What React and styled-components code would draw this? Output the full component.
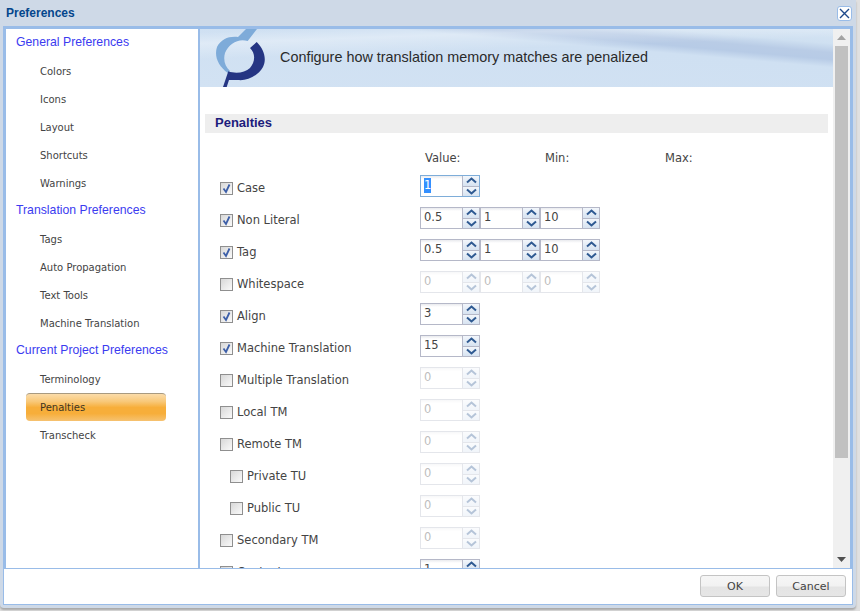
import styled, { createGlobalStyle } from "styled-components";

const GlobalStyle = createGlobalStyle`
  html, body {
    margin: 0;
    padding: 0;
    background: #e0e0e0;
    overflow: hidden;
  }
  * {
    box-sizing: border-box;
  }
`;

const Page = styled.div`
  width: 860px;
  height: 611px;
`;

const Window = styled.div`
  width: 856px;
  height: 608px;
  padding: 0 3px;
  display: flex;
  flex-direction: column;
  background: #ced9e7;
  border-radius: 0 0 4px 4px;
  box-shadow: 0 2px 2px #a8a8a8;
`;

const TitleBar = styled.div`
  height: 26px;
  flex: none;
  display: flex;
  align-items: center;
  justify-content: space-between;
  padding: 0 1px 0 3px;
  font: bold 12px "Liberation Sans", Arial, sans-serif;
  color: #04468c;
`;

const CloseButton = styled.div`
  width: 15px;
  height: 15px;
  border: 1px solid #99bce8;
  border-radius: 3px;
  background: #fff;
  display: flex;
  align-items: center;
  justify-content: center;
`;

const Main = styled.div`
  height: 543px;
  flex: none;
  display: flex;
  border: solid #99bce8;
  border-width: 3px 3px 1px 3px;
  background: #fff;
`;

const Nav = styled.div`
  width: 194px;
  flex: none;
  border-right: 2px solid #99bce8;
  padding-left: 10px;
`;

const NavGroup = styled.div`
  height: 28px;
  font: 12.25px/26px "Liberation Sans", Arial, sans-serif;
  color: #3b3bf0;
`;

const NavItem = styled.div`
  height: 28px;
  width: 140px;
  margin-left: 10px;
  padding: 1px 0 0 14px;
  border-radius: 4px;
  font: 10px/28px "DejaVu Sans", sans-serif;
  color: #444;
  ${(p) =>
    p.$active &&
    `
    color: #3d3522;
    padding-top: 0;
    border-top: 1px solid #a89a80;
    background: linear-gradient(#fbdcaa 0%, #f8c878 28%, #f7ae3a 50%, #f7ae3a 72%, #f6c271 100%);
  `}
`;

const Content = styled.div`
  flex: 1;
  min-width: 0;
  display: flex;
  overflow: hidden;
`;

const Pane = styled.div`
  flex: 1;
  min-width: 0;
  overflow: hidden;
`;

const Banner = styled.div`
  height: 58px;
  display: flex;
  align-items: center;
  gap: 15px;
  padding-left: 15px;
  background:
    linear-gradient(178deg, rgba(255, 255, 255, 0) 4%, rgba(255, 255, 255, 0.32) 18%, rgba(255, 255, 255, 0) 38%),
    linear-gradient(185deg, #d6e5f4 0%, #cfe0f1 13%, #b9cce6 21%, #b7cbe6 27%, #cfe0f2 34%, #d2e2f3 100%);
`;

const BannerText = styled.div`
  font: 14.4px "Liberation Sans", Arial, sans-serif;
  color: #2a2a2a;
  margin-bottom: 2px;
`;

const SectionBar = styled.div`
  margin: 27px 5px 0 5px;
  height: 19px;
  padding-left: 10px;
  background: #eeeeee;
  font: bold 13px/17px "Liberation Sans", Arial, sans-serif;
  color: #1c1c7c;
`;

const ColumnHeads = styled.div`
  display: flex;
  height: 16px;
  margin: 17px 0 0 225px;
`;

const ColumnHead = styled.div`
  width: 120px;
  font: 11.5px/16px "DejaVu Sans", sans-serif;
  color: #444;
`;

const Rows = styled.div`
  margin-top: 6px;
`;

const Row = styled.div`
  height: 32px;
  display: flex;
  align-items: center;
  padding-left: ${(p) => (p.$indent ? 30 : 20)}px;
`;

const Check = styled.div`
  width: 13px;
  height: 13px;
  flex: none;
  border: 1px solid #8f8f8f;
  background: linear-gradient(135deg, #d8d8d8, #fafafa);
  display: flex;
  align-items: center;
  justify-content: center;
`;

const Label = styled.div`
  width: ${(p) => (p.$indent ? 177 : 187)}px;
  padding-left: 4px;
  flex: none;
  font: 11.5px "DejaVu Sans", sans-serif;
  color: #444;
`;

const Spinners = styled.div`
  display: flex;
  margin-top: -4px;
`;

const SpinnerBox = styled.div`
  width: 60px;
  height: 22px;
  display: flex;
  border: 1px solid ${(p) => (p.$focus ? "#7eadd9" : "#b5b8c8")};
  opacity: ${(p) => (p.$disabled ? 0.35 : 1)};
`;

const SpinnerValue = styled.div`
  flex: 1;
  padding: 0 0 0 3px;
  background: linear-gradient(#e9eaee, #fff 3px);
  font: 11.5px/19px "DejaVu Sans", sans-serif;
  color: #444;
`;

const Selected = styled.span`
  display: inline-block;
  line-height: 15px;
  background: #3390ff;
  color: #fff;
`;

const SpinButtons = styled.div`
  width: 17px;
  display: flex;
  flex-direction: column;
`;

const SpinButton = styled.div`
  flex: 1;
  display: flex;
  align-items: center;
  justify-content: center;
  background: linear-gradient(#f2f6fb, #d7e3f1);
  border-left: 1px solid #b5b8c8;
  & + & {
    border-top: 1px solid #b5b8c8;
  }
`;

const Scrollbar = styled.div`
  width: 17px;
  flex: none;
  display: flex;
  flex-direction: column;
  align-items: center;
  background: #f0f0f0;
  padding: 0 2px 0;
`;

const ScrollArrow = styled.div`
  height: 17px;
  flex: none;
  display: flex;
  align-items: center;
  justify-content: center;
`;

const ScrollThumb = styled.div`
  width: 13px;
  height: 412px;
  flex: none;
  background: #c1c1c1;
`;

const ScrollSpace = styled.div`
  flex: 1;
`;

const Footer = styled.div`
  flex: 1;
  display: flex;
  justify-content: flex-end;
  gap: 6px;
  padding: 6px 6px 0 0;
  background: #fff;
  border: 1px solid #99bce8;
  border-top: none;
  margin-bottom: 3px;
`;

const Button = styled.div`
  width: 70px;
  height: 22px;
  border: 1px solid #c4c4c4;
  border-radius: 3px;
  text-align: center;
  font: 11px/21px "DejaVu Sans", sans-serif;
  color: #444;
  background: linear-gradient(#f6f6f6 0%, #f2f2f2 50%, #e4e4e4 55%, #e6e6e6 100%);
`;

const navData = [
  { title: "General Preferences", items: ["Colors", "Icons", "Layout", "Shortcuts", "Warnings"] },
  { title: "Translation Preferences", items: ["Tags", "Auto Propagation", "Text Tools", "Machine Translation"] },
  { title: "Current Project Preferences", items: ["Terminology", "Penalties", "Transcheck"] },
];

const rows = [
  { label: "Case", checked: true, values: ["1"], focus: true },
  { label: "Non Literal", checked: true, values: ["0.5", "1", "10"] },
  { label: "Tag", checked: true, values: ["0.5", "1", "10"] },
  { label: "Whitespace", values: ["0", "0", "0"], disabled: true },
  { label: "Align", checked: true, values: ["3"] },
  { label: "Machine Translation", checked: true, values: ["15"] },
  { label: "Multiple Translation", values: ["0"], disabled: true },
  { label: "Local TM", values: ["0"], disabled: true },
  { label: "Remote TM", values: ["0"], disabled: true },
  { label: "Private TU", values: ["0"], disabled: true, indent: true },
  { label: "Public TU", values: ["0"], disabled: true, indent: true },
  { label: "Secondary TM", values: ["0"], disabled: true },
  { label: "Context", values: ["1"] },
];

const Chevron = ({ up }) => (
  <svg width="11" height="7" viewBox="0 0 11 7">
    <path d={up ? "M1 5.5 5.5 1.5 10 5.5" : "M1 1.5 5.5 5.5 10 1.5"} fill="none" stroke="#2f5a92" strokeWidth="2" />
  </svg>
);

const Spinner = ({ value, focus, disabled }) => (
  <SpinnerBox $focus={focus} $disabled={disabled}>
    <SpinnerValue>{focus ? <Selected>{value}</Selected> : value}</SpinnerValue>
    <SpinButtons>
      <SpinButton>
        <Chevron up />
      </SpinButton>
      <SpinButton>
        <Chevron />
      </SpinButton>
    </SpinButtons>
  </SpinnerBox>
);

const Logo = () => (
  <svg width="50" height="58" viewBox="0 0 50 58">
    <path d="M31 0H42L32.7 12C24 9 14 14 10 24C8 31 10 38 15 42L13 44C3 37 -1 27 2 18C6 10 14 7 23 8Z" fill="#7eabd9" />
    <path d="M41.7 13C49 20 52 30 48 38C43 47 32 52 23 51L14 51L11.7 58H8L13.3 42.3C20 45 30 44 35 39C40 33 41 25 35 19Z" fill="#253583" />
  </svg>
);

const App = () => (
  <Page>
    <GlobalStyle />
    <Window>
      <TitleBar>
        Preferences
        <CloseButton>
          <svg width="11" height="11" viewBox="0 0 11 11">
            <path d="M1 1 10 10M10 1 1 10" stroke="#1f4a8c" strokeWidth="1.4" />
          </svg>
        </CloseButton>
      </TitleBar>
      <Main>
        <Nav>
          {navData.map((group) => (
            <div key={group.title}>
              <NavGroup>{group.title}</NavGroup>
              {group.items.map((item) => (
                <NavItem key={item} $active={item === "Penalties"}>
                  {item}
                </NavItem>
              ))}
            </div>
          ))}
        </Nav>
        <Content>
          <Pane>
            <Banner>
              <Logo />
              <BannerText>Configure how translation memory matches are penalized</BannerText>
            </Banner>
            <SectionBar>Penalties</SectionBar>
            <ColumnHeads>
              <ColumnHead>Value:</ColumnHead>
              <ColumnHead>Min:</ColumnHead>
              <ColumnHead>Max:</ColumnHead>
            </ColumnHeads>
            <Rows>
              {rows.map((r) => (
                <Row key={r.label} $indent={r.indent}>
                  <Check>
                    {r.checked && (
                      <svg width="11" height="11" viewBox="0 0 11 11">
                        <path d="M2.5 5.5 5 9 8.5 1.5" fill="none" stroke="#3d5fa8" strokeWidth="1.8" />
                      </svg>
                    )}
                  </Check>
                  <Label $indent={r.indent}>{r.label}</Label>
                  <Spinners>
                    {r.values.map((v, i) => (
                      <Spinner key={i} value={v} focus={r.focus} disabled={r.disabled} />
                    ))}
                  </Spinners>
                </Row>
              ))}
            </Rows>
          </Pane>
          <Scrollbar>
            <ScrollArrow>
              <svg width="9" height="5" viewBox="0 0 9 5">
                <path d="M4.5 0 9 5H0Z" fill="#a3a3a3" />
              </svg>
            </ScrollArrow>
            <ScrollThumb />
            <ScrollSpace />
            <ScrollArrow>
              <svg width="9" height="5" viewBox="0 0 9 5">
                <path d="M0 0H9L4.5 5Z" fill="#505050" />
              </svg>
            </ScrollArrow>
          </Scrollbar>
        </Content>
      </Main>
      <Footer>
        <Button>OK</Button>
        <Button>Cancel</Button>
      </Footer>
    </Window>
  </Page>
);

export default App;
